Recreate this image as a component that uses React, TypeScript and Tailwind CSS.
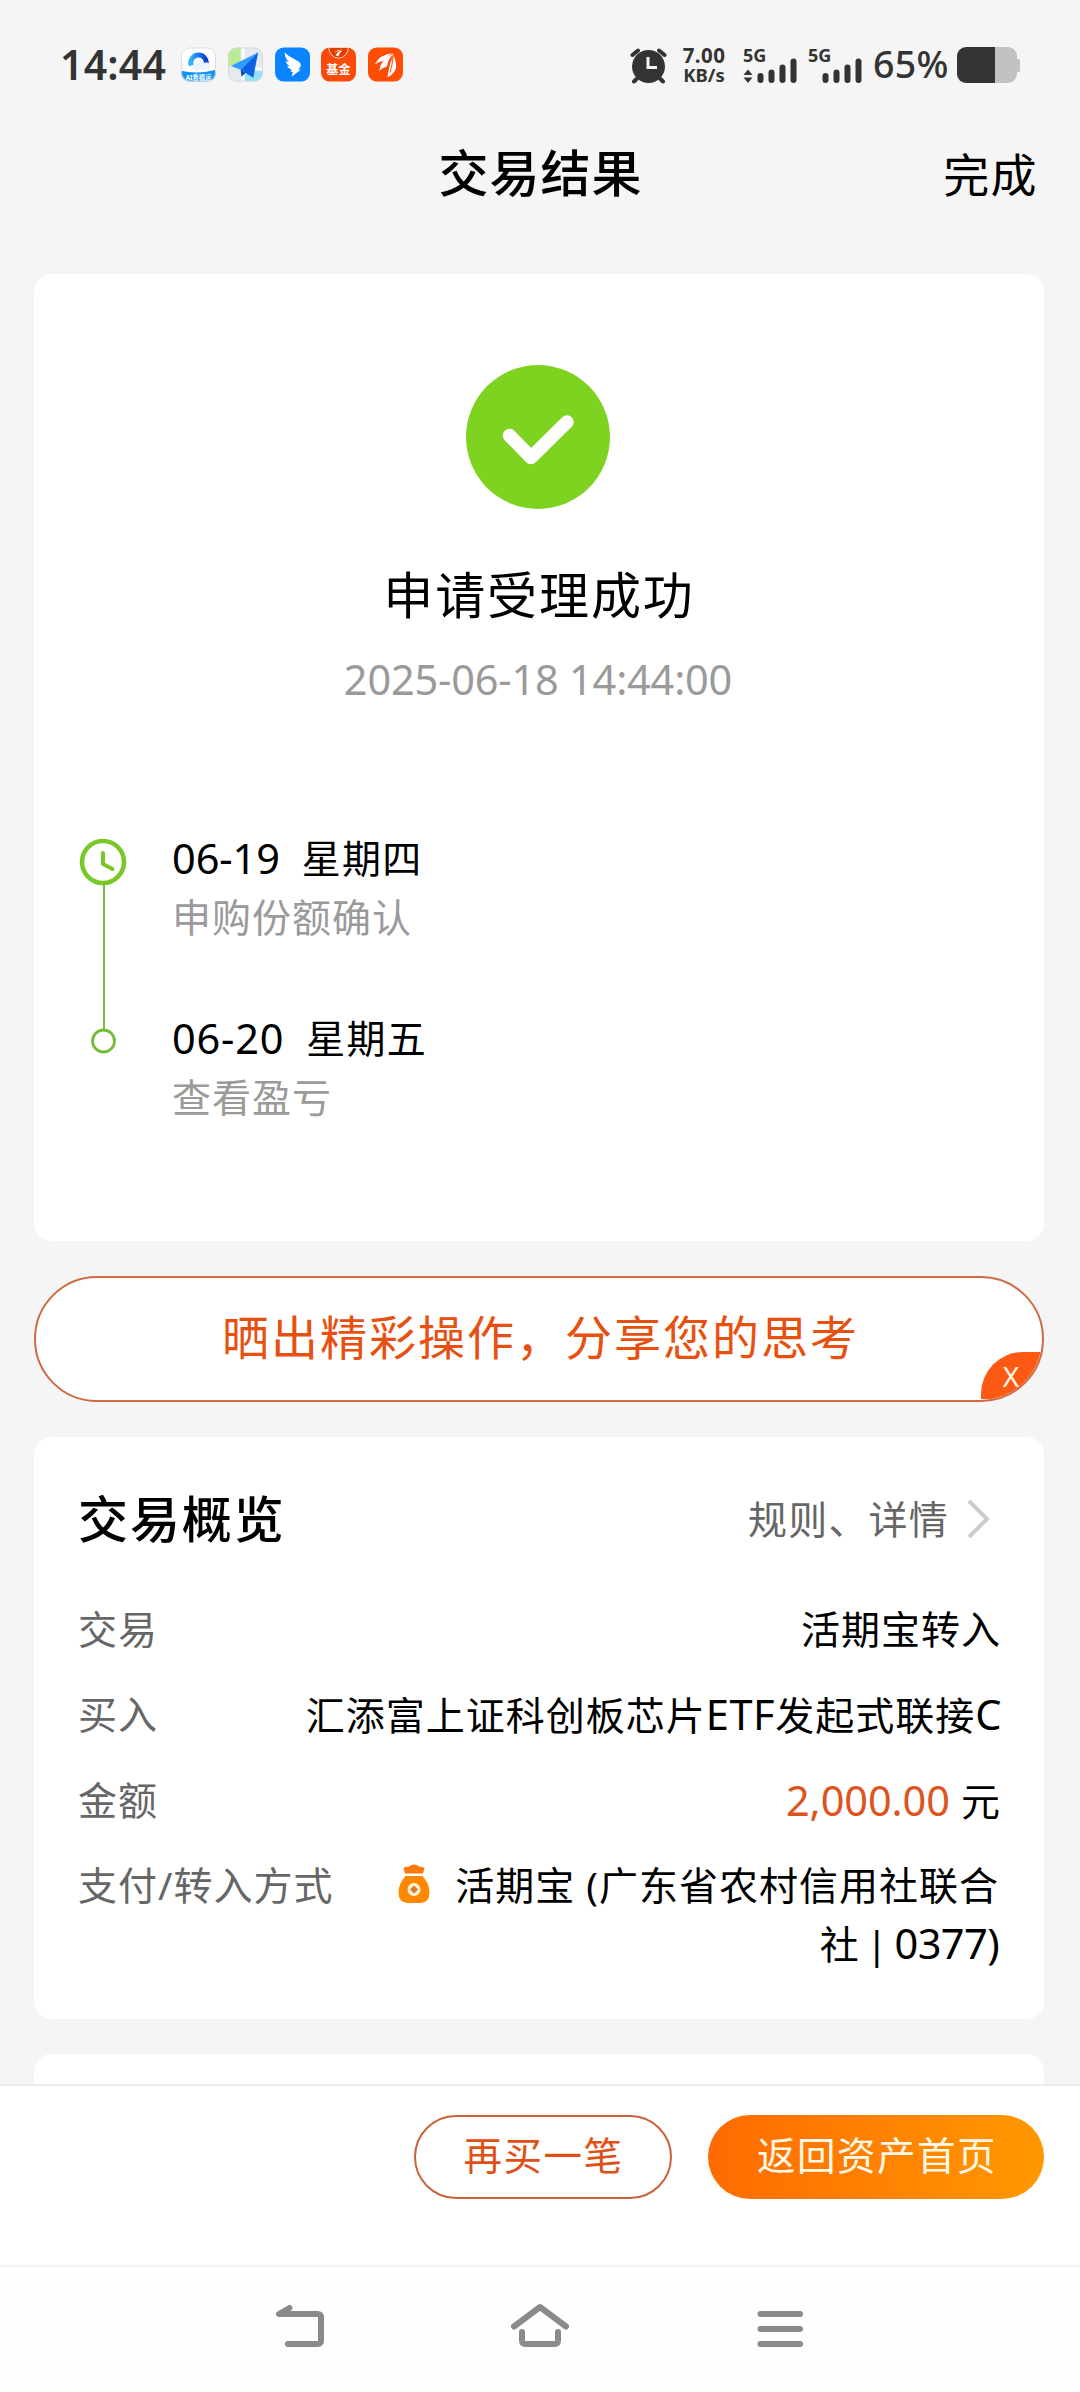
import React from 'react';
import clsx from 'clsx';

interface Step {
  date: string;
  weekday: string;
  text: string;
  tracking: string;
}

const steps: Step[] = [
  { date: '06-19', weekday: '星期四', text: '申购份额确认', tracking: 'tracking-[-0.1px]' },
  { date: '06-20', weekday: '星期五', text: '查看盈亏', tracking: 'tracking-[0.8px]' },
];

export default function App() {
  return (
    <div className="w-[1080px] h-[2392px] overflow-hidden flex flex-col bg-[#f5f5f5] text-black font-['Noto_Sans','Noto_Sans_CJK_SC',sans-serif]">
      <StatusBar />

      {/* Title bar */}
      <header className="relative h-[144px] shrink-0 flex items-start justify-center">
        <h1 className="mt-[7px] pl-px text-[50px] leading-[72px] tracking-[1px] font-medium">交易结果</h1>
        <button className="absolute right-[42px] top-[8px] text-[46px] leading-[72px] tracking-[1.4px]">完成</button>
      </header>

      <main className="h-[1810px] shrink-0 overflow-hidden flex flex-col px-[34px]">
        <ResultCard />
        <ShareBanner />
        <OverviewCard />
        <section className="mt-[35px] h-[120px] shrink-0 w-[1010px] rounded-[18px] bg-white" />
      </main>

      {/* Footer actions */}
      <footer className="h-[181px] shrink-0 bg-white border-t-2 border-[#ebebeb] flex justify-end pt-[29px] pr-[36px] gap-[36px]">
        <button className="w-[258px] h-[84px] rounded-full border-2 border-[#c9623a] text-[#e04f14] text-[38.5px] leading-none tracking-[1.5px] pb-[3px] pl-px">
          再买一笔
        </button>
        <button className="w-[336px] h-[84px] rounded-full bg-linear-to-r from-[#ff6a00] to-[#ff9800] text-[#fff8e6] text-[38.5px] leading-none tracking-[1.5px] pb-[3px] pl-[2px]">
          返回资产首页
        </button>
      </footer>

      <NavBar />
    </div>
  );
}

// ── Status bar ──

function StatusBar() {
  return (
    <div className="h-[130px] shrink-0 flex items-start pt-[47px] pl-[60px] text-[#333]">
      <span className="-mt-px w-[121px] text-[41px] leading-[36px] font-semibold tracking-[0.2px]">14:44</span>
      <div className="w-[222px] flex justify-between h-[36px]">
        <CloudApp />
        <MapApp />
        <WingApp />
        <FundApp />
        <BrokerApp />
      </div>

      <svg className="ml-[227px] mt-px shrink-0" width="37" height="36" viewBox="0 0 37 36">
        <circle cx="18.5" cy="18.500" r="16.5" fill="#333" />
        <path d="M2.500 7 8 2.500M34.500 7 29 2.500M6.500 31l-2.500 2.500M30.500 31l2.500 2.500" stroke="#333" strokeWidth="4" strokeLinecap="round" />
        <path d="M18 9v10.500h9" stroke="#f5f5f5" strokeWidth="3" fill="none" />
      </svg>

      <div className="ml-[13px] w-[48px] flex flex-col items-center font-bold">
        <span className="text-[20.5px] leading-[17px] tracking-[0.4px]">7.00</span>
        <span className="mt-[3px] text-[18.5px] leading-[16px]">KB/s</span>
      </div>

      <Signal className="ml-[15px]" arrows />
      <Signal className="ml-[11px]" />

      <span className="-mt-px ml-[11px] w-[83px] text-[37.5px] leading-[36px] font-medium tracking-[0.3px]">65%</span>
      <svg className="ml-px shrink-0" width="63" height="36" viewBox="0 0 63 36">
        <path d="M38 0h13a9 9 0 0 1 9 9v3h1.500a1.500 1.500 0 0 1 1.500 1.500v10a1.500 1.500 0 0 1-1.500 1.500H60v2a9 9 0 0 1-9 9H38z" fill="#c2c2c2" />
        <path d="M38 0v36H9a9 9 0 0 1-9-9V9a9 9 0 0 1 9-9z" fill="#333" />
      </svg>
    </div>
  );
}

function Signal({ className, arrows }: { className: string; arrows?: boolean }) {
  return (
    <div className={clsx('relative w-[54px] h-[36px] shrink-0', className)}>
      <span className="absolute left-0 top-[-1px] text-[18px] leading-[18px] font-bold">5G</span>
      <svg width="54" height="36" viewBox="0 0 54 36">
        {arrows && <path d="M.5 28 5 22.500 9.500 28zM.5 30.500 5 36 9.500 30.500z" fill="#333" />}
        <path d="M17.500 29v4M28.500 25.500V33M39.500 20.500V33M50.500 14.500V33" stroke="#333" strokeWidth="6" strokeLinecap="round" />
      </svg>
    </div>
  );
}

function CloudApp() {
  return (
    <svg width="35" height="35" viewBox="0 0 36 35">
      <defs>
        <clipPath id="cloud-clip"><rect width="36" height="35" rx="9" /></clipPath>
        <linearGradient id="cloud-ring" x1="0" x2="1">
          <stop offset="0" stopColor="#35b4fb" />
          <stop offset="1" stopColor="#0a3fd0" />
        </linearGradient>
      </defs>
      <g clipPath="url(#cloud-clip)">
        <rect width="36" height="36" fill="#fff" />
        <path d="M10.500 18.500a8 8 0 1 1 15 0" fill="none" stroke="url(#cloud-ring)" strokeWidth="5" />
        <path d="M12 23a4 4 0 0 1 3-6 5 5 0 0 1 9-1 4 4 0 0 1 4 7z" fill="#eaf4ff" />
        <path d="M0 24q18 4 36-1v13H0z" fill="#1495f5" />
        <text x="18" y="33" fontSize="6.500" fontWeight="700" textAnchor="middle" fill="#fff">AI看福运</text>
      </g>
      <rect x=".5" y=".5" width="35" height="34" rx="8.500" fill="none" stroke="#d8dde2" />
    </svg>
  );
}

function MapApp() {
  return (
    <svg width="35" height="35" viewBox="0 0 36 35">
      <defs>
        <clipPath id="map-clip"><rect width="36" height="35" rx="9" /></clipPath>
      </defs>
      <g clipPath="url(#map-clip)">
        <rect width="36" height="36" fill="#e6eaee" />
        <path d="M0 0h13v15L0 20z" fill="#b9eb95" />
        <path d="M17 24h19v12H17z" fill="#93e0fb" />
        <path d="M15.500 0v36M14 22h22" stroke="#fff" strokeWidth="3" />
        <path d="M31 5 3 19l10 4z" fill="#2f9bff" />
        <path d="M31 5 13 23l13 8z" fill="#0b62e4" />
        <path d="M13 23l1 7 4-4z" fill="#0a3fa8" />
      </g>
      <rect x=".5" y=".5" width="35" height="34" rx="8.500" fill="none" stroke="#d3d9d6" />
    </svg>
  );
}

function WingApp() {
  return (
    <svg width="35" height="35" viewBox="0 0 36 35">
      <rect width="36" height="35" rx="9" fill="#0a84ff" />
      <path d="M10 5q2 3 12 8 5 2.500 4.500 5.500-.5 2-2.500 4.500h2.500L17 30l1.500-5H16l1-2.500q-4-1-4.500-3.500l3 .5q-4-2-4.500-5.500l3.500 1.500Q10 11 10 5z" fill="#fff" />
    </svg>
  );
}

function FundApp() {
  return (
    <svg width="35" height="35" viewBox="0 0 36 35">
      <rect width="36" height="35" rx="9" fill="#fb4a09" />
      <path d="M8 0h20a10 11 0 0 1-20 0z" fill="#e63c00" stroke="#ffd9c8" strokeWidth="1" />
      <path d="M13 5q4-3 9-3-5 2-9 3zM15 8q3-5 7-5-3 2-4 6z" fill="#fff" />
      <text x="18" y="27.500" fontSize="12.500" fontWeight="700" textAnchor="middle" fill="#fff">基金</text>
    </svg>
  );
}

function BrokerApp() {
  return (
    <svg width="35" height="35" viewBox="0 0 36 35">
      <rect width="36" height="35" rx="9" fill="#ff4d06" />
      <path d="M7 17.500Q12 7 26 6q-6 2-8.500 7.500-5 .5-10.500 4z" fill="#fff" />
      <path d="M11.500 24q2-13 14.500-17.500-5.500 6-6.500 13-4 1-8 4.500z" fill="#fff" />
      <path d="M20.500 30.500q-1-3 1-9.500 2-7 4-14.500 3.500 7 3.500 13 0 6-8.500 11z" fill="#fff" />
      <path d="M20 28q1-12 6-20-1 11-3.500 18" fill="none" stroke="#ff4d06" strokeWidth="1" />
    </svg>
  );
}

// ── Cards ──

function ResultCard() {
  return (
    <section className="h-[967px] shrink-0 w-[1010px] rounded-[18px] bg-white flex flex-col">
      <div className="flex flex-col items-center pt-[91px] pr-[2px]">
        <svg width="144" height="144" viewBox="0 0 144 144">
          <circle cx="72" cy="72" r="72" fill="#7ed321" />
          <path d="M43.500 70.500 65 92.500 101 57" fill="none" stroke="#fff" strokeWidth="13.500" strokeLinecap="round" strokeLinejoin="round" />
        </svg>
        <h2 className="mt-[50px] pl-[2px] text-[50px] leading-[72px] tracking-[1.9px]">申请受理成功</h2>
        <time className="mt-[20px] text-[41.5px] leading-[56px] tracking-[-0.2px] text-[#9a9a9a]">2025-06-18 14:44:00</time>
      </div>

      <div className="mt-[125px] pl-[45px] flex">
        <svg className="shrink-0" width="50" height="240" viewBox="0 0 50 240">
          <circle cx="24" cy="30" r="21" fill="none" stroke="#78c828" strokeWidth="4.500" />
          <path d="M24 21v11l9.500 5" fill="none" stroke="#78c828" strokeWidth="4" strokeLinecap="round" strokeLinejoin="round" />
          <path d="M25 52v145" stroke="#78bb40" strokeWidth="2" />
          <circle cx="24.500" cy="209" r="11" fill="none" stroke="#73bd35" strokeWidth="2.800" />
        </svg>
        <ul className="-mt-[4px] ml-[43px] flex flex-col gap-[60px]">
          {steps.map((s) => (
            <li key={s.date} className="h-[120px] text-[39px]">
              <p className="leading-[60px] flex gap-[22px]">
                <span className={clsx('text-[41.5px]', s.tracking)}>{s.date}</span>
                <span className="tracking-[1.2px]">{s.weekday}</span>
              </p>
              <p className="-mt-px leading-[60px] tracking-[1px] text-[#9a9a9a]">{s.text}</p>
            </li>
          ))}
        </ul>
      </div>
    </section>
  );
}

function ShareBanner() {
  return (
    <div className="relative mt-[35px] h-[126px] shrink-0 w-[1010px] rounded-full overflow-hidden border-2 border-[#cf6a42] bg-white flex items-center justify-center">
      <span className="pl-[3px] pb-[4px] text-[47px] leading-none tracking-[2px] text-[#e8500f]">晒出精彩操作，分享您的思考</span>
      <button className="absolute right-0 bottom-[1px] w-[61px] h-[47px] rounded-tl-[42px] bg-[#fc5a14] text-[#fff8e6] text-[28px] leading-[48px] pr-px text-center">
        X
      </button>
    </div>
  );
}

function OverviewCard() {
  return (
    <section className="mt-[35px] h-[582px] shrink-0 w-[1010px] rounded-[18px] bg-white pt-[46px] pl-[44px] pr-[43px]">
      <div className="h-[72px] flex items-center justify-between">
        <h2 className="text-[50px] leading-[72px] tracking-[1.9px] font-medium">交易概览</h2>
        <a className="flex items-center pr-[9px] text-[39px] leading-[60px] tracking-[1.2px] text-[#666]">
          规则、详情
          <svg className="ml-[17px]" width="26" height="40" viewBox="0 0 26 40">
            <path d="M3 2 21 20 3 38" fill="none" stroke="#ccc" strokeWidth="4" />
          </svg>
        </a>
      </div>
      <dl className="mt-[44px] flex flex-col gap-[25px]">
        <Row label="交易">活期宝转入</Row>
        <Row label="买入">
          汇添富上证科创板芯片<span className="text-[41.5px] tracking-[0.6px]">ETF</span>发起式联接
          <span className="text-[41.5px] tracking-[-0.5px]">C</span>
        </Row>
        <Row label="金额">
          <span className="text-[41.5px] tracking-[-0.1px] text-[#dd5420]">2,000.00</span> 元
        </Row>
        <Row label="支付/转入方式" className="-mt-px">
          <MoneyBag />
          活期宝 (广东省农村信用社联合
          <br />
          <span className="[word-spacing:-5px]">社 | <span className="text-[41.5px] tracking-[-0.6px]">0377)</span></span>
        </Row>
      </dl>
    </section>
  );
}

function Row({ label, className, children }: { label: string; className?: string; children: React.ReactNode }) {
  return (
    <div className={clsx('flex justify-between text-[39px] leading-[60px] tracking-[1px]', className)}>
      <dt className="shrink-0 text-[#666]">{label}</dt>
      <dd className={clsx('text-right whitespace-nowrap', className && 'pr-[2px] leading-[59px]')}>{children}</dd>
    </div>
  );
}

function MoneyBag() {
  return (
    <svg className="inline-block align-[-4px] mr-[24px]" width="34" height="40" viewBox="0 0 34 40">
      <path d="M8 9.500Q7 6 6.500 4.500 8 2 11 3q2.500-2.500 6-2.500T23 3q3-1 4.500 1.500Q27 6 26 9.500z" fill="#fb7a10" />
      <path d="M8.500 12h17Q32.500 20 32.500 28q0 11-9 11h-13q-9 0-9-11 0-8 7-16z" fill="#ff8800" />
      <circle cx="17" cy="25.500" r="6.500" fill="#fff3dc" />
      <path d="M17 21.500l4 4-4 4-4-4z" fill="#d97a20" />
    </svg>
  );
}

// ── System navigation ──

function NavBar() {
  return (
    <nav className="h-[127px] shrink-0 bg-[#fefefe] border-t-2 border-[#f3f3f3] flex justify-center gap-[180px] pt-[33px]">
      <svg width="60" height="60" viewBox="270 2300 60 60" fill="none" stroke="#8a8a8a" strokeWidth="6" strokeLinecap="round" strokeLinejoin="round">
        <path d="M289.500 2308 279 2314h38.500q3.500 0 3.500 3.500v23q0 3.500-3.500 3.500H288" />
      </svg>
      <svg width="60" height="60" viewBox="510 2300 60 60" fill="none" stroke="#8a8a8a" strokeWidth="6" strokeLinecap="round" strokeLinejoin="round">
        <path d="M514 2326.500 540 2307l26 19.500M522 2332v8.500q0 3.500 3.500 3.500h29q3.500 0 3.500-3.500v-8.500" />
      </svg>
      <svg width="60" height="60" viewBox="750 2300 60 60" fill="none" stroke="#8a8a8a" strokeWidth="6" strokeLinecap="round">
        <path d="M760.500 2314h39.500M760.500 2329h39.500M760.500 2344h39.500" />
      </svg>
    </nav>
  );
}
